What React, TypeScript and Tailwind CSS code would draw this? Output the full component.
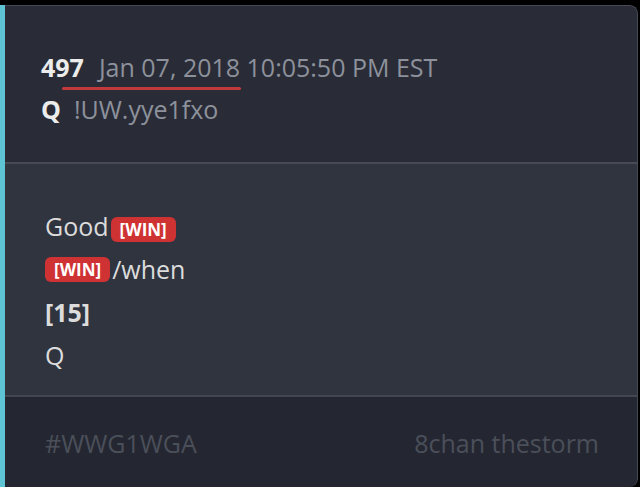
import React from "react";

const Badge = ({ children }: { children: React.ReactNode }) => (
  <span className="inline-flex items-center h-[25px] px-[9px] rounded-[6px] bg-[#cf3232] text-white font-bold text-[17px] leading-none align-middle">
    {children}
  </span>
);

export default function App() {
  return (
    <div
      className="w-[640px] h-[487px] bg-black pt-[5px] overflow-hidden"
      style={{ fontFamily: '"Open Sans", "Noto Sans", sans-serif' }}
    >
      <div className="w-[638px] h-[482px] flex flex-col border-l-[5px] border-[#5ec3d3] rounded-tr-[8px] rounded-br-[8px] overflow-hidden">
        <div className="flex flex-col bg-[#292c36] border-t border-r border-[#454954] rounded-tr-[8px] pl-[36px] pt-[45px] pb-[37px]">
          <div className="flex items-center h-[32px] text-[25px] leading-[32px]">
            <span className="font-bold text-[#ececec]">497</span>
            <span className="ml-[15px] text-[#8d919c]">Jan 07, 2018 10:05:50 PM EST</span>
          </div>
          <div className="ml-[21px] mt-[4px] w-[179px] h-[3px] rounded-full bg-[#c23a3c]" />
          <div className="flex items-center h-[32px] mt-[3px] text-[25px] leading-[32px]">
            <span className="font-bold text-[#ececec]">Q</span>
            <span className="ml-[13px] text-[#8d919c]">!UW.yye1fxo</span>
          </div>
        </div>
        <div className="h-[2px] bg-[#474b56] shrink-0" />
        <div className="flex flex-col bg-[#30343f] border-r border-[#454954] pl-[40px] pt-[41px] pb-[18px] text-[25px] leading-[43px] text-[#dcdcdc]">
          <div className="flex items-center h-[43px]">
            <span>Good</span>
            <span className="ml-[2px]"><Badge>[WIN]</Badge></span>
          </div>
          <div className="flex items-center h-[43px]">
            <Badge>[WIN]</Badge>
            <span className="ml-[2px]">/when</span>
          </div>
          <div className="h-[43px] font-bold">[15]</div>
          <div className="h-[43px]">Q</div>
        </div>
        <div className="h-[2px] bg-[#424650] shrink-0" />
        <div className="flex-1 flex items-center justify-between bg-[#242731] border-r border-[#454954] rounded-br-[8px] pl-[40px] pr-[38px] pt-[4px] text-[25px] text-[#4b4f5a]">
          <span>#WWG1WGA</span>
          <span>8chan thestorm</span>
        </div>
      </div>
    </div>
  );
}
